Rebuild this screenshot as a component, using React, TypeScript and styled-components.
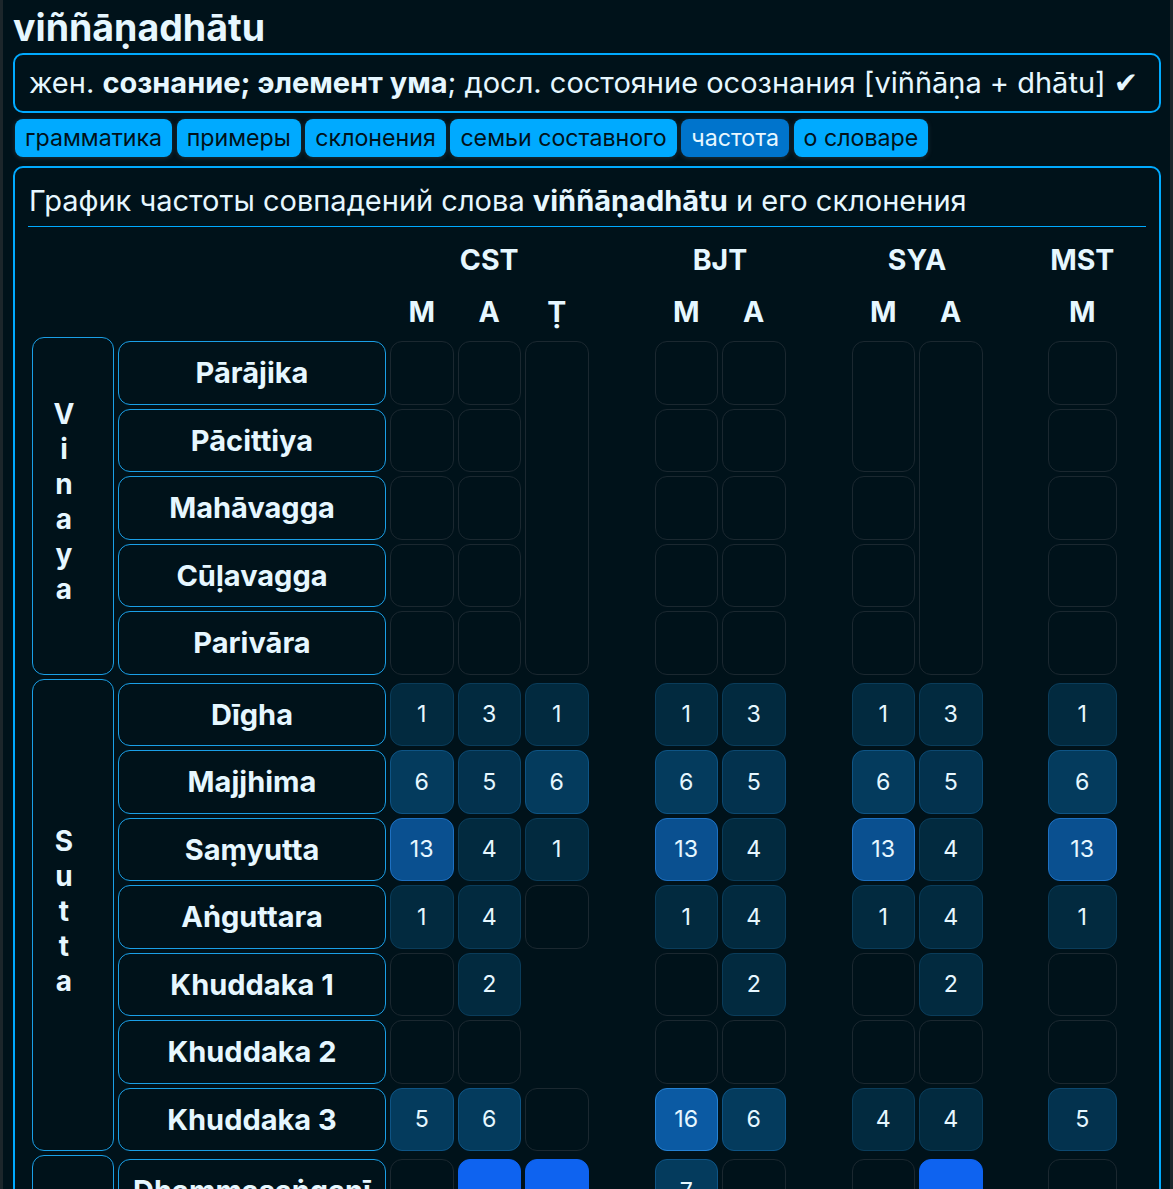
import React from 'react';
import styled, { createGlobalStyle } from 'styled-components';

const PRIMARY = '#00aaff';
const DARK = '#00121a';
const LIGHT = '#e6f7ff';

const GlobalStyle = createGlobalStyle`
  html, body { margin: 0; padding: 0; background: ${DARK}; }
  body { font-family: Inter, "Noto Sans", "DejaVu Sans", sans-serif; color: ${LIGHT}; }
  * { box-sizing: border-box; }
`;

const Page = styled.div`
  min-height: 100vh;
  border-left: 3px solid #1c262b;
  border-right: 3px solid #1c262b;
  padding: 7px 9px 20px 10px;
`;

const Title = styled.h1`
  margin: 0;
  font-size: 37.5px;
  font-weight: 700;
  line-height: 42px;
  color: ${LIGHT};
`;

const Summary = styled.div`
  margin-top: 4px;
  border: 2px solid ${PRIMARY};
  border-radius: 10px;
  padding: 11px 14px;
  font-size: 29px;
  line-height: 34px;
  color: ${LIGHT};
  b { font-weight: 700; }
`;

const Tabs = styled.div`
  display: flex;
  gap: 4.5px;
  margin-top: 6px;
  padding-left: 2px;
`;

const Tab = styled.div<{ $active?: boolean }>`
  height: 38px;
  display: flex;
  align-items: center;
  padding: 0 10px;
  border-radius: 8px;
  font-size: 23.2px;
  background: ${(p) => (p.$active ? '#0074cc' : PRIMARY)};
  color: ${(p) => (p.$active ? LIGHT : DARK)};
  box-shadow: 0 1px 5px rgba(120, 140, 150, 0.25);
`;

const Panel = styled.div`
  margin-top: 9px;
  border: 2px solid ${PRIMARY};
  border-radius: 10px;
  padding: 0 13px 20px 13px;
`;

const Heading = styled.div`
  font-size: 29px;
  line-height: 34px;
  padding: 16px 0 8px 1px;
  border-bottom: 1px solid ${PRIMARY};
  b { font-weight: 700; }
`;

const Grid = styled.div`
  margin: 6px 0 0 4px;
  display: grid;
  grid-template-columns: 82px 268px 63.5px 63.5px 63.5px 58px 63.5px 63.5px 58px 63.5px 63.5px 57.5px 68.5px;
  grid-template-rows: 52px 44px 0 repeat(5, 63.5px) 0 repeat(7, 63.5px) 0 repeat(7, 63.5px);
  gap: 4px;
`;

const SourceHead = styled.div<{ $col: number; $span: number; $row: number }>`
  grid-column: ${(p) => p.$col} / span ${(p) => p.$span};
  grid-row: ${(p) => p.$row};
  display: flex;
  align-items: center;
  justify-content: center;
  font-size: 28.5px;
  font-weight: 700;
  color: ${LIGHT};
`;

const LabelCell = styled.div<{ $row: number; $span: number }>`
  grid-column: 1;
  grid-row: ${(p) => p.$row} / span ${(p) => p.$span};
  border: 1px solid #1a9fe6;
  border-radius: 12px;
  display: flex;
  flex-direction: column;
  align-items: center;
  justify-content: center;
  padding: 0 18px 7px 0;
  font-size: 28px;
  font-weight: 700;
  line-height: 35px;
`;

const Letter = styled.span`
  display: block;
`;

const BookCell = styled.div<{ $row: number }>`
  grid-column: 2;
  grid-row: ${(p) => p.$row};
  border: 1px solid #1a9fe6;
  border-radius: 12px;
  display: flex;
  align-items: center;
  justify-content: center;
  font-size: 29px;
  font-weight: 700;
`;

const LEVELS: Record<number, { bg: string; bd: string }> = {
  0: { bg: 'transparent', bd: '#1b2830' },
  1: { bg: '#022a3f', bd: '#0a3c5a' },
  2: { bg: '#03324e', bd: '#0c4870' },
  3: { bg: '#043b5d', bd: '#0e5485' },
  4: { bg: '#0a5090', bd: '#1d70c2' },
  5: { bg: '#0b5aa3', bd: '#2582d4' },
  9: { bg: '#0e63f0', bd: '#0e63f0' },
};

const DataCell = styled.div<{ $col: number; $row: number; $span: number; $lvl: number }>`
  grid-column: ${(p) => p.$col};
  grid-row: ${(p) => p.$row} / span ${(p) => p.$span};
  border: 1px solid ${(p) => LEVELS[p.$lvl].bd};
  background: ${(p) => LEVELS[p.$lvl].bg};
  border-radius: 12px;
  display: flex;
  align-items: center;
  justify-content: center;
  font-size: 23.2px;
  color: ${LIGHT};
`;

const DATA_COLS = [3, 4, 5, 7, 8, 10, 11, 13];

type V = [string, number] | null | 'x';
type Row = { name: string; cells: V[] };

const E: V = ['', 0];

const sutta: Row[] = [
  { name: 'Dīgha', cells: [['1', 1], ['3', 1], ['1', 1], ['1', 1], ['3', 1], ['1', 1], ['3', 1], ['1', 1]] },
  { name: 'Majjhima', cells: [['6', 3], ['5', 2], ['6', 3], ['6', 3], ['5', 2], ['6', 3], ['5', 2], ['6', 3]] },
  { name: 'Saṃyutta', cells: [['13', 4], ['4', 1], ['1', 1], ['13', 4], ['4', 1], ['13', 4], ['4', 1], ['13', 4]] },
  { name: 'Aṅguttara', cells: [['1', 1], ['4', 1], E, ['1', 1], ['4', 1], ['1', 1], ['4', 1], ['1', 1]] },
  { name: 'Khuddaka 1', cells: [E, ['2', 1], 'x', E, ['2', 1], E, ['2', 1], E] },
  { name: 'Khuddaka 2', cells: [E, E, 'x', E, E, E, E, E] },
  { name: 'Khuddaka 3', cells: [['5', 3], ['6', 3], E, ['16', 5], ['6', 3], ['4', 1], ['4', 1], ['5', 2]] },
];

const abhi: Row[] = [
  { name: 'Dhammasaṅgaṇī', cells: [E, ['', 9], ['', 9], ['7', 3], E, E, ['', 9], E] },
  { name: 'Vibhaṅga', cells: [E, ['', 9], ['', 9], ['3', 1], E, E, ['', 9], E] },
  { name: 'Dhātukathā', cells: [E, E, E, E, E, E, E, E] },
  { name: 'Puggalapaññatti', cells: [E, E, E, E, E, E, E, E] },
  { name: 'Kathāvatthu', cells: [E, ['2', 1], ['1', 1], E, E, E, ['2', 1], E] },
  { name: 'Yamaka', cells: [E, E, E, E, E, E, E, E] },
  { name: 'Paṭṭhāna', cells: [E, E, E, E, E, E, E, E] },
];

const vinayaBooks = ['Pārājika', 'Pācittiya', 'Mahāvagga', 'Cūḷavagga', 'Parivāra'];

const Label = ({ text, row, span }: { text: string; row: number; span: number }) => (
  <LabelCell $row={row} $span={span}>
    {text.split('').map((c, i) => (
      <Letter key={i}>{c}</Letter>
    ))}
  </LabelCell>
);

const renderRows = (rows: Row[], startRow: number) =>
  rows.map((r, i) => {
    const row = startRow + i;
    return (
      <React.Fragment key={r.name}>
        <BookCell $row={row}>{r.name}</BookCell>
        {r.cells.map((c, j) =>
          c === 'x' || c === null ? null : (
            <DataCell key={j} $col={DATA_COLS[j]} $row={row} $span={1} $lvl={c[1]}>
              {c[0]}
            </DataCell>
          )
        )}
      </React.Fragment>
    );
  });

export default function App() {
  return (
    <>
      <GlobalStyle />
      <Page>
        <Title>viññāṇadhātu</Title>
        <Summary>
          жен. <b>сознание; элемент ума</b>; досл. состояние осознания [viññāṇa + dhātu] ✔
        </Summary>
        <Tabs>
          <Tab>грамматика</Tab>
          <Tab>примеры</Tab>
          <Tab>склонения</Tab>
          <Tab>семьи составного</Tab>
          <Tab $active>частота</Tab>
          <Tab>о словаре</Tab>
        </Tabs>
        <Panel>
          <Heading>
            График частоты совпадений слова <b>viññāṇadhātu</b> и его склонения
          </Heading>
          <Grid>
            <SourceHead $col={3} $span={3} $row={1}>CST</SourceHead>
            <SourceHead $col={7} $span={2} $row={1}>BJT</SourceHead>
            <SourceHead $col={10} $span={2} $row={1}>SYA</SourceHead>
            <SourceHead $col={13} $span={1} $row={1}>MST</SourceHead>
            {['M', 'A', 'Ṭ', 'M', 'A', 'M', 'A', 'M'].map((h, i) => (
              <SourceHead key={i} $col={DATA_COLS[i]} $span={1} $row={2}>
                {h}
              </SourceHead>
            ))}

            <Label text="Vinaya" row={3} span={6} />
            {vinayaBooks.map((b, i) => (
              <React.Fragment key={b}>
                <BookCell $row={4 + i}>{b}</BookCell>
                <DataCell $col={3} $row={4 + i} $span={1} $lvl={0} />
                <DataCell $col={4} $row={4 + i} $span={1} $lvl={0} />
                <DataCell $col={7} $row={4 + i} $span={1} $lvl={0} />
                <DataCell $col={8} $row={4 + i} $span={1} $lvl={0} />
                <DataCell $col={13} $row={4 + i} $span={1} $lvl={0} />
              </React.Fragment>
            ))}
            <DataCell $col={5} $row={4} $span={5} $lvl={0} />
            <DataCell $col={10} $row={4} $span={2} $lvl={0} />
            <DataCell $col={10} $row={6} $span={1} $lvl={0} />
            <DataCell $col={10} $row={7} $span={1} $lvl={0} />
            <DataCell $col={10} $row={8} $span={1} $lvl={0} />
            <DataCell $col={11} $row={4} $span={5} $lvl={0} />

            <Label text="Sutta" row={9} span={8} />
            {renderRows(sutta, 10)}

            <Label text="Abhidhamma" row={17} span={8} />
            {renderRows(abhi, 18)}
          </Grid>
        </Panel>
      </Page>
    </>
  );
}
